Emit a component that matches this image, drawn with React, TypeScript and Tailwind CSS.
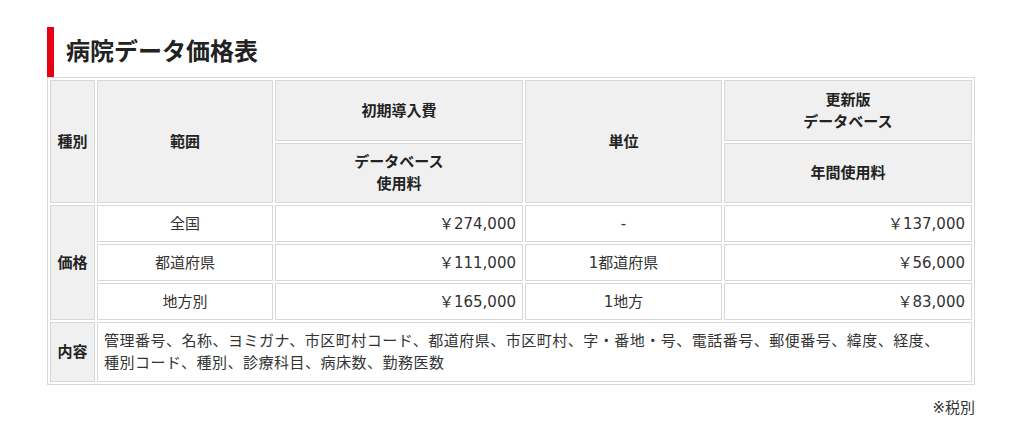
import React from 'react';

const font = { fontFamily: '"DejaVu Sans", "Noto Sans CJK JP", sans-serif' };

const th = 'border border-[#d8d8d8] bg-[#f0f0f0] font-bold text-[#222] text-center align-middle leading-[22px]';
const td = 'border border-[#d8d8d8] bg-white text-[#333] align-middle leading-[22px] px-[6px]';

const rows = [
  { area: '全国', first: '￥274,000', unit: '-', yearly: '￥137,000' },
  { area: '都道府県', first: '￥111,000', unit: '1都道府県', yearly: '￥56,000' },
  { area: '地方別', first: '￥165,000', unit: '1地方', yearly: '￥83,000' },
];

const App: React.FC = () => {
  return (
    <div className="w-[1024px] h-[422px] bg-white pl-[47px] pt-[27px] text-[15px]" style={font}>
      <div className="w-[928px]">
        <div className="h-[50px] border-l-[7px] border-[#e60012] pl-[12px] flex items-center">
          <h2 className="text-[24px] font-bold text-[#222] leading-none">病院データ価格表</h2>
        </div>

        <table className="w-[928px] table-fixed border border-[#d8d8d8] border-separate border-spacing-[2px]">
          <colgroup>
            <col className="w-[45px]" />
            <col className="w-[176px]" />
            <col className="w-[248px]" />
            <col className="w-[197px]" />
            <col className="w-[248px]" />
          </colgroup>
          <tbody>
            <tr className="h-[61px]">
              <th rowSpan={2} className={th}>種別</th>
              <th rowSpan={2} className={th}>範囲</th>
              <th className={th}>初期導入費</th>
              <th rowSpan={2} className={th}>単位</th>
              <th className={th}>
                更新版
                <br />
                データベース
              </th>
            </tr>
            <tr className="h-[60px]">
              <th className={th}>
                データベース
                <br />
                使用料
              </th>
              <th className={th}>年間使用料</th>
            </tr>
            {rows.map((r, i) => (
              <tr key={r.area} className="h-[37px]">
                {i === 0 && (
                  <th rowSpan={3} className={th}>
                    価格
                  </th>
                )}
                <td className={`${td} text-center`}>{r.area}</td>
                <td className={`${td} text-right`}>{r.first}</td>
                <td className={`${td} text-center`}>{r.unit}</td>
                <td className={`${td} text-right`}>{r.yearly}</td>
              </tr>
            ))}
            <tr className="h-[60px]">
              <th className={th}>内容</th>
              <td colSpan={4} className={`${td} text-left tracking-[0.5px]`}>
                管理番号、名称、ヨミガナ、市区町村コード、都道府県、市区町村、字・番地・号、電話番号、郵便番号、緯度、経度、
                <br />
                種別コード、種別、診療科目、病床数、勤務医数
              </td>
            </tr>
          </tbody>
        </table>

        <p className="mt-[12px] text-right text-[#333] leading-[22px]">※税別</p>
      </div>
    </div>
  );
};

export default App;
